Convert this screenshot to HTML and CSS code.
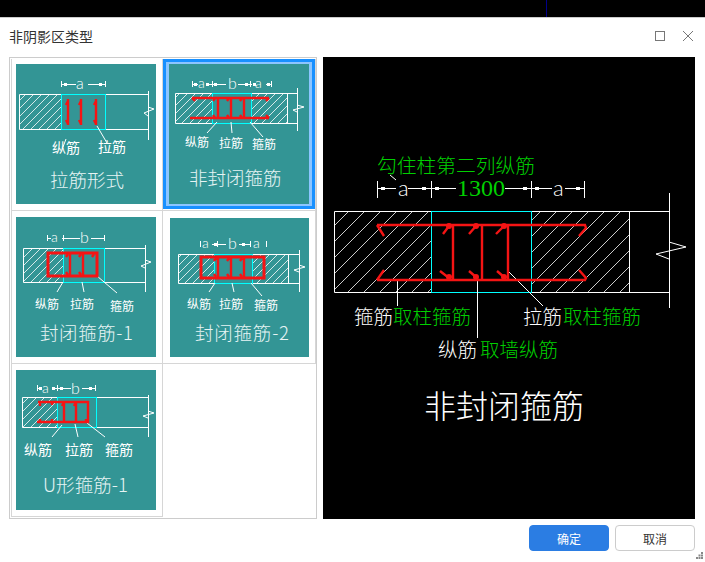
FILE: index.html
```html
<!DOCTYPE html>
<html lang="zh-CN">
<head>
<meta charset="utf-8">
<title>非阴影区类型</title>
<link rel="stylesheet" href="styles.css">
</head>
<body>
<svg class="defs" width="0" height="0" aria-hidden="true">
  <defs>
    <pattern id="hatch-s" patternUnits="userSpaceOnUse" width="8" height="8"><path d="M-1 9L9 -1" class="hl"/></pattern>
    <pattern id="hatch-l" patternUnits="userSpaceOnUse" width="16" height="16"><path d="M-1 17L17 -1" class="hl"/></pattern>
  </defs>
</svg>
<div class="app">
  <div class="topbar"><span class="topmark"></span></div>
  <div class="titlebar">
    <span class="title">非阴影区类型</span>
    <div class="winbtns">
      <svg class="winbtn" width="12" height="12" viewBox="0 0 12 12"><rect x="1.5" y="1.5" width="9" height="9" class="wi"/></svg>
      <svg class="winbtn" width="12" height="12" viewBox="0 0 12 12"><path d="M1 1L11 11M11 1L1 11" class="wi"/></svg>
    </div>
  </div>
  <div class="content">
    <div class="grid">
      <div class="cell c1 r1">
        <svg class="thumb" width="140" height="140" viewBox="0 0 140 140">
          <rect x="3.5" y="30.5" width="42" height="35" fill="url(#hatch-s)"/>
          <path class="wh" d="M45.500 30.500H3.500V65.500H45.500M89.500 30.500H132.500M89.500 65.500H132.500M132.500 27V76M132 43L138 45L128 49L132 52"/>
          <rect class="cy" x="45.5" y="30.5" width="44" height="35"/>
          <path class="wh" d="M45.500 17V23M89.500 17V23M46 20.500H60M72 20.500H89M50 75L47 83M81 62L91 79"/>
          <path class="sq" d="M48 19h3v3h-3zM83 19h3v3h-3z"/>
          <text class="dim" x="60" y="25">a</text>
          <path class="rd" d="M52 35V61M65 35V61M80 35V61M52 37L50 41M65 37L63 41M80 37L78 41M52 60L50 56M65 60L63 56M80 60L78 56"/>
          <text class="lb14" x="36" y="89">纵筋</text><text class="lb14" x="82" y="88">拉筋</text>
          <text class="ttl" x="34" y="123">拉筋形式</text>
        </svg>
      </div>
      <div class="cell c2 r1">
        <div class="selected">
          <svg class="thumb" width="140" height="140" viewBox="0 0 140 140">
            <rect x="6.5" y="29.5" width="37" height="30" fill="url(#hatch-s)"/>
            <rect x="82.5" y="29.5" width="36" height="30" fill="url(#hatch-s)"/>
            <path class="wh" d="M43.500 29.500H6.500V59.500H43.500M82.500 29.500H128.500M82.500 59.500H128.500M118.500 29.500V59.500M128.500 24V67M128 41L135 43L124 46L128 48"/>
            <rect class="cy" x="43.5" y="29.5" width="39" height="30"/>
            <path class="wh" d="M23.500 17V23M43.500 17V23M81.500 17V23M102.500 17V23M23 20.500H29M39 20.500H57M69 20.500H83M97 20.500H102M48 58L38 69M62 58L63 69M81 58L94 73"/>
            <path class="sq" d="M25 19h3v3h-3zM37 19h3v3h-3zM45 19h3v3h-3zM76 19h3v3h-3zM84 19h3v3h-3zM98 19h3v3h-3z"/>
            <text class="dim12" x="29" y="24">a</text><text class="dim" x="59" y="25">b</text><text class="dim12" x="86" y="24">a</text>
            <path class="rd" d="M23 34H100M21 54H100M49 34V54M62 34V54M75 34V54M23 34L26 37M100 34L97 37M46 34L44 37M60 34L58 37M73 34L71 37M46 54L44 51M60 54L58 51M73 54L71 51M100 54L97 51"/>
            <text class="lb12" x="16" y="83">纵筋</text><text class="lb12" x="50" y="84">拉筋</text><text class="lb12" x="83" y="85">箍筋</text>
            <text class="ttl" x="20" y="121">非封闭箍筋</text>
          </svg>
        </div>
      </div>
      <div class="cell c1 r2">
        <svg class="thumb" width="140" height="140" viewBox="0 0 140 140">
          <rect x="7.5" y="31.5" width="40" height="34" fill="url(#hatch-s)"/>
          <path class="wh" d="M47.500 31.500H7.500V65.500H47.500M88.500 31.500H129.500M88.500 65.500H129.500M129.500 28V75M129 43L135 45L125 49L129 51"/>
          <rect class="cy" x="47.5" y="31.5" width="41" height="34"/>
          <path class="wh" d="M31.500 18V24M47.500 18V24M88.500 18V24M32 21.500H35M46 21.500H64M75 21.500H88M47 65L41 75M66 65L68 75M81 59L101 76"/>
          <text class="dim12" x="35" y="25">a</text><text class="dim" x="64" y="26">b</text>
          <rect class="rd rd-c" x="32" y="36" width="49" height="23"/>
          <path class="rd" d="M54 36V59M67 36V59M78 37L76 40M52 37L50 40M65 37L63 40M52 58L50 55M65 58L63 55"/>
          <text class="lb12" x="19" y="92">纵筋</text><text class="lb12" x="54" y="92">拉筋</text><text class="lb12" x="94" y="94">箍筋</text>
          <text class="ttl" x="24" y="123" textLength="93">封闭箍筋-1</text>
        </svg>
      </div>
      <div class="cell c2 r2">
        <svg class="thumb thumb-4" width="139" height="139" viewBox="0 0 139 139">
          <rect x="8.5" y="36.5" width="36" height="29" fill="url(#hatch-s)"/>
          <rect x="82.5" y="36.5" width="36" height="29" fill="url(#hatch-s)"/>
          <path class="wh" d="M44.500 36.500H8.500V65.500H44.500M82.500 36.500H129.500M82.500 65.500H129.500M118.500 36.500V65.500M129.500 32V74M129 47L135 49L124 52L129 54"/>
          <rect class="cy" x="44.5" y="36.5" width="38" height="29"/>
          <path class="wh" d="M30.500 23V29M47.500 23V29M80.500 23V29M96.500 23V29M42 26.500H56M69 26.500H80M45 65L39 74M62 65L64 74M81 65L92 78"/>
          <path class="sq" d="M44 25h3v3h-3zM72 25h3v3h-3z"/>
          <text class="dim12" x="32" y="30">a</text><text class="dim" x="58" y="31">b</text><text class="dim12" x="83" y="30">a</text>
          <rect class="rd rd-c" x="31" y="39" width="63" height="21"/>
          <path class="rd" d="M48 39V60M61 39V60M74 39V60M46 40L44 43M59 40L57 43M72 40L70 43M46 59L44 56M59 59L57 56M72 59L70 56"/>
          <text class="lb12" x="17" y="91">纵筋</text><text class="lb12" x="49" y="91">拉筋</text><text class="lb12" x="84" y="92">箍筋</text>
          <text class="ttl" x="25" y="122" textLength="94">封闭箍筋-2</text>
        </svg>
      </div>
      <div class="cell c1 r3">
        <svg class="thumb" width="140" height="140" viewBox="0 0 140 140">
          <rect x="6.5" y="27.5" width="35" height="30" fill="url(#hatch-s)"/>
          <path class="wh" d="M41.500 27.500H6.500V57.500H41.500M80.500 27.500H132.500M80.500 57.500H132.500M132.500 25V67M132 41L138 43L127 46L132 48"/>
          <rect class="cy" x="41.5" y="27.5" width="39" height="30"/>
          <path class="wh" d="M21.500 15V21M41.500 15V21M79.500 15V21M22 18.500H26M36 18.500H55M66 18.500H79M46 55L36 67M59 54L62 67M71 53L89 67"/>
          <path class="sq" d="M23 17h3v3h-3zM36 17h3v3h-3zM44 17h3v3h-3zM73 17h3v3h-3z"/>
          <text class="dim12" x="26" y="23">a</text><text class="dim" x="55" y="24">b</text>
          <path class="rd" d="M22 32H72V52H21M48 32V52M60 32V52M24 32V36M36 32V35M48 32L46 36M60 32L58 36M24 52V49M36 52V49M48 52V49M60 52V49M70 52V49"/>
          <text class="lb14" x="8" y="85">纵筋</text><text class="lb14" x="49" y="85">拉筋</text><text class="lb14" x="89" y="85">箍筋</text>
          <text class="ttl" x="27" y="122" textLength="85">U形箍筋-1</text>
        </svg>
      </div>
    </div>
    <div class="preview">
      <svg class="preview-svg" width="372" height="462" viewBox="323 57 372 462">
        <rect x="334.5" y="211.5" width="97" height="81" fill="url(#hatch-l)"/>
        <rect x="531.5" y="211.5" width="98" height="81" fill="url(#hatch-l)"/>
        <path class="wh" d="M431.500 211.500H334.500V292.500H431.500M531.500 211.500H669.500M531.500 292.500H669.500M629.500 211.500V292.500M669.500 193V308M669 242L686 247L656 254L669 259"/>
        <rect class="cy" x="431.5" y="211.5" width="100" height="81"/>
        <path class="wh" d="M377.500 181V198M431.500 181V198M531.500 181V198M584.500 181V198M378 188.500H396M408 188.500H431M432 188.500H456M505 188.500H531M532 188.500H552M565 188.500H584M390 175L396 180"/>
        <path class="sq" d="M381 187h4v3h-4zM422 187h4v3h-4zM435 187h4v3h-4zM523 187h4v3h-4zM535 187h4v3h-4zM576 187h4v3h-4z"/>
        <path class="wh" d="M397.500 281V306M477.500 281V338M508 271L543 306"/>
        <text class="p-green p-1" x="377" y="173">勾住柱第二列纵筋</text>
        <text class="p-white p-a" x="398" y="196">a</text>
        <text class="p-green p-n" x="457" y="196" textLength="48">1300</text>
        <text class="p-white p-a" x="553" y="196">a</text>
        <path class="rdl" d="M377 225H585L586 228L579 236M377 225L384 236M377 280H585L586 278L579 270M377 280L384 270M453 225V280M482 225V280M508 225V280M449 226L443 234M476 226L469 234M504 226L496 234M449 278L440 271M476 277L469 271M504 277L497 271"/>
        <circle class="dot" cx="449" cy="226" r="3"/><circle class="dot" cx="476" cy="226" r="3"/><circle class="dot" cx="504" cy="226" r="3"/>
        <circle class="dot" cx="449" cy="277" r="3"/><circle class="dot" cx="476" cy="277" r="3"/><circle class="dot" cx="504" cy="277" r="3"/>
        <text class="p-white p-2" x="354" y="324">箍筋</text><text class="p-green p-2" x="393" y="324">取柱箍筋</text>
        <text class="p-white p-2" x="523" y="324">拉筋</text><text class="p-green p-2" x="563" y="324">取柱箍筋</text>
        <text class="p-white p-2" x="438" y="357">纵筋</text><text class="p-green p-2" x="480" y="357">取墙纵筋</text>
        <text class="p-white p-3" x="424" y="418">非封闭箍筋</text>
      </svg>
    </div>
  </div>
  <div class="footer">
    <button class="btn btn-primary" type="button">确定</button>
    <button class="btn" type="button">取消</button>
  </div>
  <svg class="grip" width="7" height="7" viewBox="0 0 7 7"><path d="M5 0h2v2H5zM2.500 2.500h2v2h-2zM5 2.500h2v2H5zM0 5h2v2H0zM2.500 5h2v2h-2zM5 5h2v2H5z"/></svg>
</div>
</body>
</html>
```
FILE: styles.css
```css
* { box-sizing: border-box; }
html, body { margin: 0; padding: 0; background: #fff; }
body { width: 705px; height: 562px; overflow: hidden; font-family: "Noto Sans CJK SC", "Liberation Sans", sans-serif; }
.defs { position: absolute; }
.app { position: relative; width: 705px; height: 562px; display: flex; flex-direction: column; }
.topbar { position: relative; height: 18px; background: #000; border-bottom: 1px solid #ccc; flex: none; }
.topmark { position: absolute; left: 546px; top: 0; width: 1px; height: 17px; background: #00008b; }
.titlebar { height: 39px; flex: none; display: flex; align-items: center; justify-content: space-between; padding: 0 11px 0 9px; }
.title { font-size: 14px; line-height: 20px; color: #333; margin-top: -4px; }
.winbtns { display: flex; gap: 16px; align-items: center; margin-top: -4px; }
.winbtn { display: block; }
.wi { fill: none; stroke: #777; stroke-width: 1; }
.content { display: flex; gap: 6px; padding: 0 10px 0 9px; flex: none; }
.grid { width: 308px; height: 462px; border: 1px solid #ccc; padding: 1px 0 1px 1px; display: grid; grid-template-columns: 152px 153px; grid-template-rows: 152px 153px 153px; align-content: start; }
.cell { border-right: 1px solid #d6d6d6; border-bottom: 1px solid #d6d6d6; }
.cell.c1 { border-left: 1px solid #d6d6d6; padding-left: 4px; }
.cell.r1 { padding-top: 5px; }
.cell.r2, .cell.r3 { padding-top: 6px; }
.cell.c2 { padding-left: 7px; }
.cell.c2.r1 { padding: 0; }
.cell.c2.r2 { padding-top: 7px; }
.selected { width: 152px; height: 150px; border: 3px solid #1890ff; padding: 2px 3px; background: #8cc5ff; }
.thumb { display: block; background: #339595; }
.hl { fill: none; stroke: #fff; stroke-width: .8; }
.wh { fill: none; stroke: #fff; stroke-width: 1; }
.cy { fill: none; stroke: #0ff; stroke-width: 1; }
.rd { fill: none; stroke: #f51414; stroke-width: 2.4; }
.rd-c { stroke-width: 3; }
.rdl { fill: none; stroke: #f51414; stroke-width: 2.4; }
.dot { fill: #f51414; }
.sq { fill: #fff; }
text { font-family: "Noto Sans CJK SC", sans-serif; font-weight: 300; fill: #fff; }
.lb14 { font-size: 14px; font-weight: 400; }
.lb12 { font-size: 12px; font-weight: 400; }
.ttl { font-size: 18.5px; fill: #e6f4f4; }
.dim { font-size: 16px; font-family: "Lato", sans-serif; font-weight: 300; }
.dim12 { font-size: 14px; font-family: "Lato", sans-serif; font-weight: 300; }
.preview { width: 372px; height: 462px; background: #000; flex: none; }
.preview-svg { display: block; }
.p-green { fill: #00d000; }
.p-white { fill: #fff; }
.p-1 { font-size: 19.75px; }
.p-2 { font-size: 19.5px; }
.p-3 { font-size: 32px; }
.p-a { font-size: 22px; font-family: "Lato", sans-serif; font-weight: 300; }
.p-n { font-size: 24px; font-family: "Liberation Serif", serif; font-weight: 400; }
.footer { display: flex; justify-content: flex-end; gap: 6px; padding: 6px 10px 0 0; }
.btn { width: 80px; height: 26px; padding: 0; border: 1px solid #ccc; border-radius: 4px; background: #fff; color: #333; font: 12px "Noto Sans CJK SC", sans-serif; }
.btn-primary { background: #2b7de3; border-color: #2b7de3; color: #fff; }
.grip { position: absolute; right: 2px; bottom: 3px; fill: #888; }
```
